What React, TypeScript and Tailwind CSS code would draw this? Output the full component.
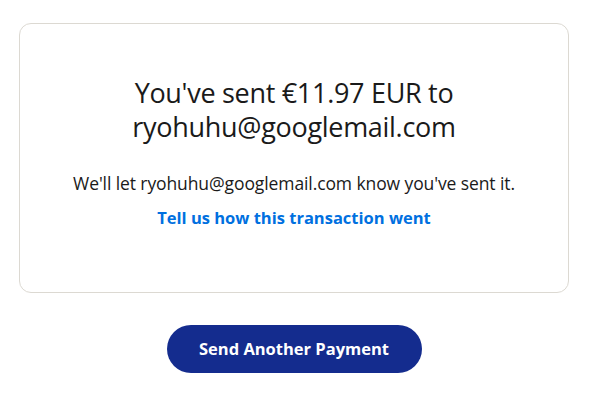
export default function App() {
  return (
    <div className="min-h-screen bg-white pl-[19px] pr-[23px] pt-[23px] font-['Open_Sans','Lato',sans-serif] text-[#1a1a1a]">
      <div className="flex h-[270px] flex-col items-center rounded-xl border border-[#dcd9d2] px-6 pt-[52px] text-center">
        <h1 className="text-[27px] leading-[34px] font-normal tracking-[-0.3px]">
          You've sent €11.97 EUR to
          <br />
          ryohuhu@googlemail.com
        </h1>
        <p className="mt-[27px] text-[17.5px] leading-6 tracking-[-0.1px]">
          We'll let ryohuhu@googlemail.com know you've sent it.
        </p>
        <a href="#" className="mt-[11px] text-[16.5px] leading-6 font-bold text-[#0070e0]">
          Tell us how this transaction went
        </a>
      </div>
      <div className="mt-[32px] flex justify-center">
        <button className="h-[48px] w-[255px] rounded-full bg-[#142c8e] text-[16.5px] font-bold text-white">
          Send Another Payment
        </button>
      </div>
    </div>
  );
}
